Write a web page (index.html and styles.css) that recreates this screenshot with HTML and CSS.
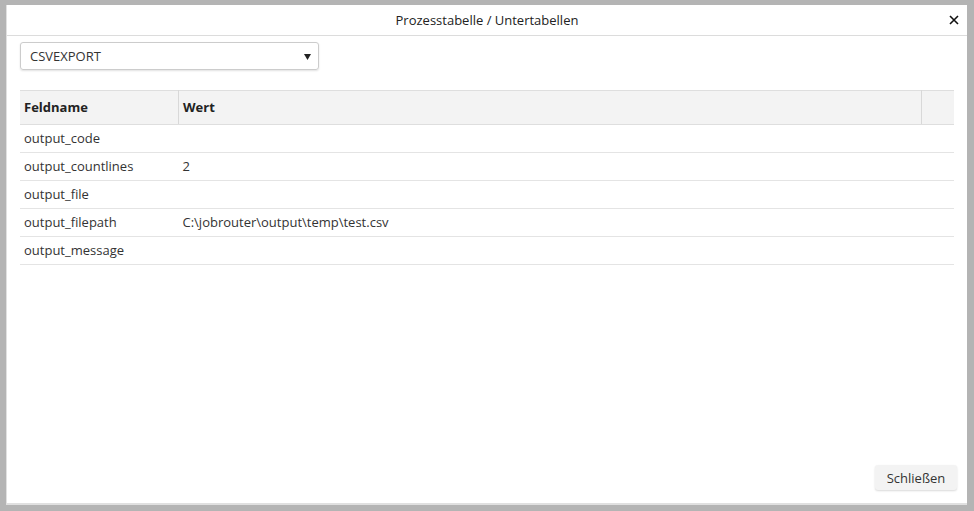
FILE: index.html
```html
<!DOCTYPE html>
<html lang="de">
<head>
<meta charset="utf-8">
<title>Prozesstabelle / Untertabellen</title>
<link rel="stylesheet" href="styles.css">
</head>
<body>
<div class="dialog">
  <div class="dialog-header">
    <span class="dialog-title">Prozesstabelle / Untertabellen</span>
    <span class="close" aria-label="Schließen">
      <svg width="10" height="10" viewBox="0 0 10 10"><path d="M1 1L9 9M9 1L1 9" stroke="#111" stroke-width="1.6"/></svg>
    </span>
  </div>
  <div class="dialog-body">
    <div class="select">
      <span>CSVEXPORT</span>
      <svg class="caret" width="7" height="6" viewBox="0 0 7 6"><path d="M0 0H7L3.5 6Z" fill="#222"/></svg>
    </div>
    <table class="grid">
      <thead>
        <tr><th class="c1">Feldname</th><th class="c2">Wert</th><th class="c3"></th></tr>
      </thead>
      <tbody>
        <tr><td>output_code</td><td></td><td></td></tr>
        <tr><td>output_countlines</td><td>2</td><td></td></tr>
        <tr><td>output_file</td><td></td><td></td></tr>
        <tr><td>output_filepath</td><td>C:\jobrouter\output\temp\test.csv</td><td></td></tr>
        <tr><td>output_message</td><td></td><td></td></tr>
      </tbody>
    </table>
  </div>
  <div class="dialog-footer">
    <button class="btn">Schließen</button>
  </div>
</div>
</body>
</html>
```
FILE: styles.css
```css
html, body {
  margin: 0;
  padding: 0;
  height: 100%;
}
body {
  background: #b4b4b4;
  font-family: "Open Sans", "Noto Sans", sans-serif;
  font-size: 13px;
  color: #333;
  padding: 5px 6px 6px 6px;
  box-sizing: border-box;
}
.dialog {
  background: #fff;
  border-left: 1px solid #e0e0e0;
  border-bottom: 2px solid #e0e0e0;
  height: 500px;
  width: 961px;
  box-sizing: border-box;
  display: flex;
  flex-direction: column;
}
.dialog-header {
  height: 30px;
  border-bottom: 1px solid #dcdcdc;
  display: flex;
  align-items: center;
  justify-content: center;
  position: relative;
}
.dialog-title {
  color: #222;
  font-size: 13px;
}
.close {
  position: absolute;
  right: 8px;
  top: 10px;
  line-height: 0;
}
.dialog-body {
  padding: 6px 12px 0 13px;
  flex: 1;
}
.select {
  width: 299px;
  height: 28px;
  box-sizing: border-box;
  border: 1px solid #ccc;
  border-radius: 3px;
  box-shadow: 0 1px 2px rgba(0,0,0,0.12);
  display: flex;
  align-items: center;
  justify-content: space-between;
  padding: 0 7px 0 9px;
  color: #333;
}
.caret {
  margin-top: 1px;
}
.grid {
  margin-top: 20px;
  width: 934px;
  border-collapse: collapse;
  table-layout: fixed;
}
.grid th {
  background: #f3f3f3;
  border-top: 1px solid #dedede;
  border-bottom: 1px solid #dedede;
  height: 32px;
  text-align: left;
  font-weight: 700;
  color: #222;
  padding: 0 4px 1px 4px;
}
.grid th.c1 { width: 150px; border-right: 1px solid #d8d8d8; }
.grid th.c2 { border-right: 1px solid #d8d8d8; }
.grid th.c3 { width: 24px; }
.grid td {
  height: 28px;
  border-bottom: 1px solid #e4e4e4;
  padding: 0 4px 1px 4px;
  box-sizing: border-box;
  color: #333;
}
.dialog-footer {
  display: flex;
  justify-content: flex-end;
  padding: 0 10px 13px 0;
}
.btn {
  font-family: "Open Sans", "Noto Sans", sans-serif;
  font-size: 13px;
  color: #333;
  background: #f3f3f3;
  border: none;
  border-radius: 3px;
  box-shadow: 0 1px 2px rgba(0,0,0,0.15);
  height: 25px;
  width: 82px;
  padding: 0;
}
```
